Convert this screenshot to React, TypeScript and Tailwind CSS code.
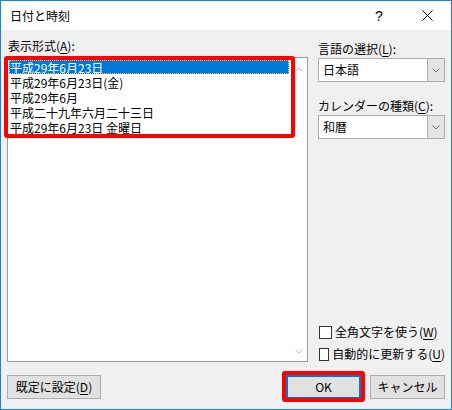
import React from 'react';

const items = [
  '平成29年6月23日',
  '平成29年6月23日(金)',
  '平成29年6月',
  '平成二十九年六月二十三日',
  '平成29年6月23日 金曜日',
];

function Chevron({ up, color }: { up?: boolean; color: string }) {
  return (
    <svg width="8" height="5" viewBox="0 0 8 5" className="block">
      <polyline
        points={up ? '0.5,4.5 4,1 7.5,4.5' : '0.5,0.5 4,4 7.5,0.5'}
        fill="none"
        stroke={color}
        strokeWidth="1"
      />
    </svg>
  );
}

function Select({ value }: { value: string }) {
  return (
    <div className="h-[24px] border border-[#acacac] bg-white flex">
      <div className="flex-1 pl-[4px] leading-[22px]">{value}</div>
      <div className="w-[17px] bg-[#e5e5e5] border-l border-[#acacac] flex items-center justify-center">
        <Chevron color="#707070" />
      </div>
    </div>
  );
}

function Check({ children }: { children: React.ReactNode }) {
  return (
    <div className="h-[16px] flex items-center">
      <div className="ml-[1px] w-[13px] h-[13px] border border-[#333333] bg-white" />
      <div className="ml-[3px] leading-[16px]">{children}</div>
    </div>
  );
}

export default function App() {
  return (
    <div className="w-[452px] h-[410px] border border-[#1883d7] bg-[#f0f0f0] flex flex-col text-[12px] text-black font-[family-name:'Noto_Sans_CJK_JP',sans-serif]">
      {/* title bar */}
      <div className="h-[29px] bg-white flex items-center shrink-0">
        <div className="pl-[9px] flex-1 leading-[16px]">日付と時刻</div>
        <div className="w-[14px] text-center text-[14px] leading-[16px] mr-[36px] font-[family-name:'Liberation_Sans',sans-serif]">?</div>
        <svg width="11" height="11" viewBox="0 0 11 11" className="mr-[18px]">
          <line x1="0.5" y1="0.5" x2="10.5" y2="10.5" stroke="#000" strokeWidth="1" />
          <line x1="10.5" y1="0.5" x2="0.5" y2="10.5" stroke="#000" strokeWidth="1" />
        </svg>
      </div>

      {/* body */}
      <div className="flex-1 flex flex-col px-[6px]">
        <div className="flex gap-[10px]">
          {/* left column */}
          <div className="w-[301px] pt-[8px] flex flex-col">
            <div className="h-[16px] leading-[16px] pl-[1px]">
              表示形式(<span className="underline underline-offset-2">A</span>):
            </div>
            <div className="relative mt-[3px] h-[305px] border border-[#9a9a9a] bg-white flex">
              <div className="flex-1 pt-[2px] px-[1px]">
                {items.map((t, i) => (
                  <div
                    key={t}
                    className={
                      i === 0
                        ? 'h-[14px] mb-[1px] bg-[#0078d7] text-white border border-dotted border-[#f5c56a] flex items-center overflow-hidden'
                        : 'h-[15px] pl-[1px] flex items-center overflow-hidden'
                    }
                  >
                    <span className="block whitespace-nowrap text-[12px] leading-[13px]">{t}</span>
                  </div>
                ))}
              </div>
              <div className="w-[17px] flex flex-col justify-between items-center pt-[9px] pb-[7px]">
                <Chevron up color="#c2c2c2" />
                <Chevron color="#c2c2c2" />
              </div>
              {/* red highlight */}
              <div className="absolute left-[-4px] top-[-2px] w-[291px] h-[82px] border-[4px] border-[#ff0000] rounded-[3px] pointer-events-none" />
            </div>
          </div>

          {/* right column */}
          <div className="w-[127px] pt-[11px] flex flex-col">
            <div className="h-[16px] leading-[16px]">
              言語の選択(<span className="underline underline-offset-2">L</span>):
            </div>
            <div className="mt-[1px]">
              <Select value="日本語" />
            </div>
            <div className="mt-[16px] h-[16px] leading-[16px]">
              カレンダーの種類(<span className="underline underline-offset-2">C</span>):
            </div>
            <div className="mt-[1px]">
              <Select value="和暦" />
            </div>
            <div className="flex-1" />
            <div className="flex flex-col gap-[6px] whitespace-nowrap">
              <Check>
                全角文字を使う(<span className="underline underline-offset-2">W</span>)
              </Check>
              <Check>
                自動的に更新する(<span className="underline underline-offset-2">U</span>)
              </Check>
            </div>
          </div>
        </div>

        {/* buttons */}
        <div className="mt-[13px] flex justify-between">
          <div className="w-[94px] h-[24px] border border-[#adadad] bg-[#e1e1e1] flex items-center justify-center leading-[16px]">
            既定に設定(<span className="underline underline-offset-2">D</span>)
          </div>
          <div className="flex gap-[9px]">
            <div className="relative w-[75px] h-[24px] border-2 border-[#0078d7] bg-[#e1e1e1] flex items-center justify-center leading-[16px]">
              OK
              <div className="absolute left-[-6px] top-[-6px] right-[-6px] bottom-[-5px] border-[4px] border-[#ff0000] rounded-[3px] pointer-events-none" />
            </div>
            <div className="w-[75px] h-[24px] border border-[#adadad] bg-[#e1e1e1] flex items-center justify-center leading-[16px]">
              キャンセル
            </div>
          </div>
        </div>
      </div>
    </div>
  );
}
